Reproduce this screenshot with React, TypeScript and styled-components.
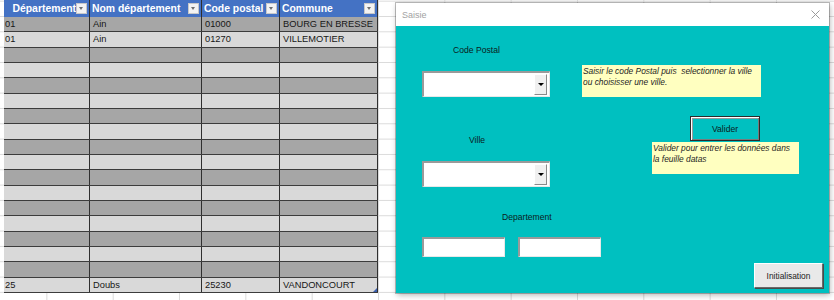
import styled, { createGlobalStyle } from 'styled-components'

const GlobalStyle = createGlobalStyle`
  html, body {
    margin: 0;
    padding: 0;
    background: #ffffff;
    overflow: hidden;
  }
`

const headers = ['Département', 'Nom département', 'Code postal', 'Commune']
const cellPad = [1, 3, 3, 3]

const emptyRow = ['', '', '', '']
const rows: string[][] = [
  ['01', 'Ain', '01000', 'BOURG EN BRESSE'],
  ['01', 'Ain', '01270', 'VILLEMOTIER'],
  ...Array.from({ length: 15 }, () => emptyRow),
  ['25', 'Doubs', '25230', 'VANDONCOURT'],
]

const noteCode = ['Saisir le code Postal puis  selectionner la ville', 'ou choisisser une ville.']
const noteValider = ['Valider pour entrer les données dans', 'la feuille datas']

export default function App() {
  return (
    <>
      <GlobalStyle />
      <Screen>
        <Sheet>
          <Table>
            <HeaderRow>
              {headers.map((h, i) => (
                <HeaderCell key={h} $clipStart={i === 0}>
                  <HeaderText>{h}</HeaderText>
                  <FilterButton />
                </HeaderCell>
              ))}
            </HeaderRow>
            {rows.map((row, r) => (
              <DataRow key={r} $dark={r % 2 === 0}>
                {row.map((v, c) => (
                  <Cell key={c} $pad={cellPad[c]}>
                    {v}
                    {r === rows.length - 1 && c === 3 && <ResizeHandle />}
                  </Cell>
                ))}
              </DataRow>
            ))}
          </Table>
        </Sheet>

        <Dialog>
          <TitleBar>
            <Title>Saisie</Title>
            <svg width="9" height="9" viewBox="0 0 9 9">
              <path d="M0.5 0.5 L8.5 8.5 M8.5 0.5 L0.5 8.5" stroke="#9a9a9a" strokeWidth="1" />
            </svg>
          </TitleBar>
          <FormBody>
            <Band $top={19}>
              <LeftGroup>
                <Label $left={31}>Code Postal</Label>
                <Combo $top={15}>
                  <DropButton />
                </Combo>
              </LeftGroup>
              <RightGroup>
                <Note $left={32} $top={20} $width={179}>
                  {noteCode.map((l) => (
                    <span key={l}>{l}</span>
                  ))}
                </Note>
              </RightGroup>
            </Band>

            <Band $top={19}>
              <LeftGroup>
                <Label $left={47} $top={19}>Ville</Label>
                <Combo $top={15}>
                  <DropButton />
                </Combo>
              </LeftGroup>
              <RightGroup>
                <ValiderButton>Valider</ValiderButton>
                <Note $left={102} $top={1} $width={147}>
                  {noteValider.map((l) => (
                    <span key={l}>{l}</span>
                  ))}
                </Note>
              </RightGroup>
            </Band>

            <BottomBand>
              <LeftGroup>
                <Label $left={80}>Departement</Label>
                <BoxRow>
                  <TextBox />
                  <TextBox />
                </BoxRow>
              </LeftGroup>
              <InitButton>Initialisation</InitButton>
            </BottomBand>
          </FormBody>
        </Dialog>
      </Screen>
    </>
  )
}

const Screen = styled.div`
  position: relative;
  width: 834px;
  height: 300px;
  overflow: hidden;
`

const Sheet = styled.div`
  height: 300px;
  padding-left: 4px;
  box-sizing: border-box;
  background-color: #ffffff;
  background-image:
    linear-gradient(to right, #dadada 1px, transparent 1px),
    linear-gradient(to bottom, #dadada 1px, transparent 1px);
  background-size: 66.33px 100%, 100% 15.33px;
  background-position: 378px 0, 0 16px;
`

const Table = styled.div`
  width: 374px;
  font-family: 'Liberation Sans', Arial, sans-serif;
`

const HeaderRow = styled.div`
  display: grid;
  grid-template-columns: 86px 112px 78px 98px;
  height: 17px;
  background: #4472c4;
`

const HeaderCell = styled.div<{ $clipStart: boolean }>`
  display: flex;
  align-items: center;
  justify-content: ${(p) => (p.$clipStart ? 'flex-end' : 'space-between')};
  padding-left: ${(p) => (p.$clipStart ? 0 : 2)}px;
  padding-right: 2px;
  border-right: 1px solid #2f2f2f;
  overflow: hidden;
`

const HeaderText = styled.span`
  flex: none;
  white-space: nowrap;
  color: #ffffff;
  font-weight: bold;
  font-size: 10.4px;
`

const FilterButton = styled.span`
  position: relative;
  flex: none;
  width: 11px;
  height: 11px;
  background: #f3f3f3;
  border: 1px solid #c8c8c8;
  box-sizing: border-box;

  &::after {
    content: '';
    position: absolute;
    left: 2px;
    top: 3px;
    border-left: 2.5px solid transparent;
    border-right: 2.5px solid transparent;
    border-top: 3px solid #6e6e6e;
  }
`

const DataRow = styled.div<{ $dark: boolean }>`
  display: grid;
  grid-template-columns: 86px 112px 78px 98px;
  height: 15.33px;
  box-sizing: border-box;
  background: ${(p) => (p.$dark ? '#a6a6a6' : '#d9d9d9')};
  border-bottom: 1px solid #3c3c3c;
`

const Cell = styled.div<{ $pad: number }>`
  position: relative;
  display: flex;
  align-items: center;
  padding-left: ${(p) => p.$pad}px;
  border-right: 1px solid #2f2f2f;
  color: #161616;
  font-size: 9.3px;
  white-space: nowrap;
  overflow: hidden;
`

const ResizeHandle = styled.span`
  position: absolute;
  right: 0;
  bottom: 0;
  border-left: 4px solid transparent;
  border-bottom: 4px solid #3a5fae;
`

const Dialog = styled.div`
  position: absolute;
  left: 396px;
  top: 3px;
  width: 433px;
  height: 290px;
  display: flex;
  flex-direction: column;
  box-shadow: 0 0 0 1px rgba(0, 0, 0, 0.25), 1px 2px 6px rgba(0, 0, 0, 0.3);
  font-family: 'Liberation Sans', Arial, sans-serif;
`

const TitleBar = styled.div`
  height: 23px;
  flex: none;
  display: flex;
  align-items: center;
  justify-content: space-between;
  padding: 0 9px 0 6px;
  background: #ffffff;
`

const Title = styled.span`
  color: #a2a2a2;
  font-size: 9px;
`

const FormBody = styled.div`
  flex: 1;
  display: flex;
  flex-direction: column;
  background: #00c0c0;
`

const Band = styled.div<{ $top: number }>`
  display: flex;
  align-items: flex-start;
  margin-top: ${(p) => p.$top}px;
  padding-left: 26px;
`

const BottomBand = styled.div`
  flex: 1;
  display: flex;
  justify-content: space-between;
  align-items: flex-start;
  padding: 25px 6px 5px 26px;
`

const LeftGroup = styled.div`
  display: flex;
  flex-direction: column;
  align-items: flex-start;
`

const RightGroup = styled.div`
  display: flex;
  flex-direction: column;
  align-items: flex-start;
`

const Label = styled.span<{ $left: number; $top?: number }>`
  margin-left: ${(p) => p.$left}px;
  margin-top: ${(p) => p.$top ?? 0}px;
  height: 11px;
  line-height: 11px;
  font-size: 8.6px;
  color: #0b1c1c;
`

const Sunken = styled.div`
  background: #ffffff;
  box-sizing: border-box;
  border-top: 2px solid #9a9a9a;
  border-left: 2px solid #9a9a9a;
  border-right: 1px solid #e8e8e8;
  border-bottom: 1px solid #e8e8e8;
`

const Combo = styled(Sunken)<{ $top: number }>`
  width: 128px;
  height: 26px;
  margin-top: ${(p) => p.$top}px;
  display: flex;
  justify-content: flex-end;
  align-items: center;
  padding-right: 2px;
`

const DropButton = styled.span`
  position: relative;
  width: 13px;
  height: 21px;
  box-sizing: border-box;
  background: #f0f0f0;
  border-top: 1px solid #ffffff;
  border-left: 1px solid #ffffff;
  border-right: 1px solid #8a8a8a;
  border-bottom: 1px solid #8a8a8a;

  &::after {
    content: '';
    position: absolute;
    left: 3px;
    top: 8px;
    border-left: 3px solid transparent;
    border-right: 3px solid transparent;
    border-top: 3px solid #000000;
  }
`

const BoxRow = styled.div`
  display: flex;
  gap: 13px;
  margin-top: 14px;
`

const TextBox = styled(Sunken)`
  width: 83px;
  height: 20px;
`

const Note = styled.div<{ $left: number; $top: number; $width: number }>`
  display: flex;
  flex-direction: column;
  width: ${(p) => p.$width}px;
  height: 32px;
  margin-left: ${(p) => p.$left}px;
  margin-top: ${(p) => p.$top}px;
  padding: 1px 1px 0;
  box-sizing: border-box;
  background: #ffffc0;
  color: #1e1e1e;
  font-size: 8.4px;
  font-style: italic;
  line-height: 10.5px;
  white-space: pre;
`

const ValiderButton = styled.div`
  width: 70px;
  height: 25px;
  margin-left: 140px;
  box-sizing: border-box;
  display: flex;
  align-items: center;
  justify-content: center;
  background: #00c0c0;
  border: 1px solid #2a2a2a;
  box-shadow: inset 1px 1px 0 #ffffff, inset -1px -1px 0 #7a7a7a, inset 2px 2px 0 #9a9a9a;
  font-size: 8.6px;
  color: #0b1c1c;
`

const InitButton = styled.div`
  align-self: flex-end;
  width: 69px;
  height: 25px;
  box-sizing: border-box;
  display: flex;
  align-items: center;
  justify-content: center;
  background: #e9e9e9;
  border-top: 1px solid #ffffff;
  border-left: 1px solid #ffffff;
  border-right: 1px solid #6a6a6a;
  border-bottom: 1px solid #6a6a6a;
  box-shadow: 1px 1px 0 #4a4a4a;
  font-size: 8.4px;
  color: #1b1b1b;
`
